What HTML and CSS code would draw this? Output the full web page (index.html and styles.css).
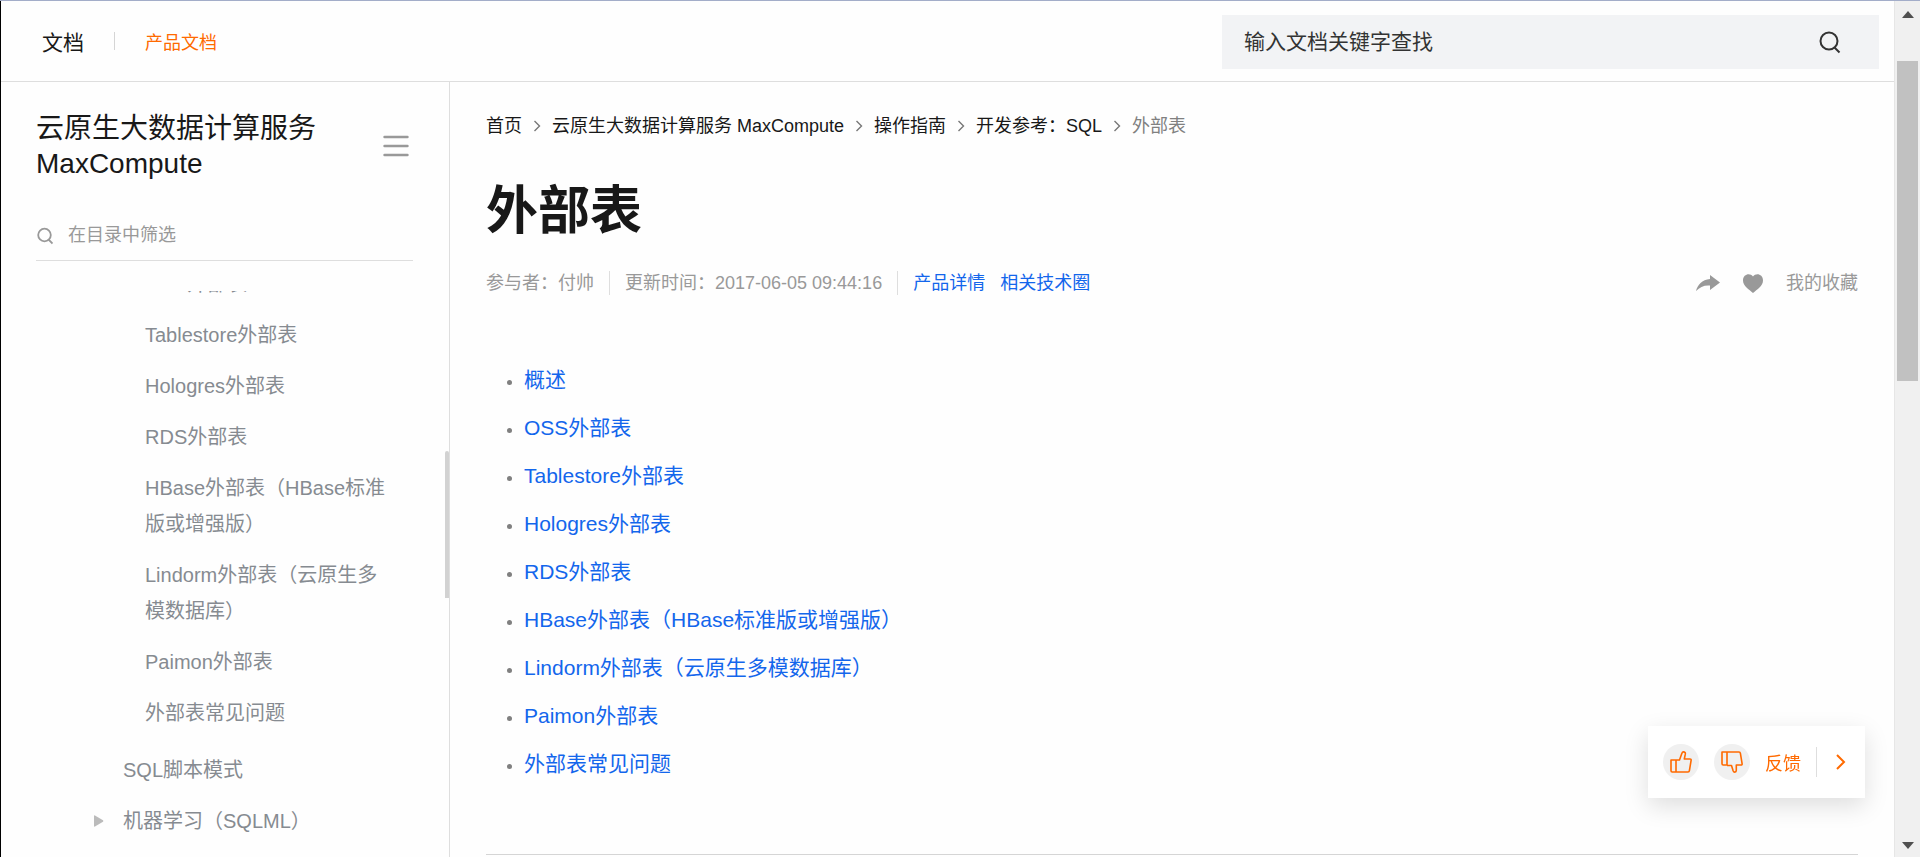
FILE: index.html
```html
<!DOCTYPE html>
<html lang="zh-CN">
<head>
<meta charset="utf-8">
<title>外部表</title>
<link rel="stylesheet" href="styles.css">
</head>
<body>
<div class="window">
  <div class="page">
    <header class="topbar">
      <nav class="topnav">
        <a class="brand" href="#">文档</a>
        <a class="section-link" href="#">产品文档</a>
      </nav>
      <form class="search">
        <input class="search-input" type="text" placeholder="输入文档关键字查找" aria-label="输入文档关键字查找">
        <button class="icon-button" type="button" aria-label="搜索">
          <svg width="24" height="24" viewBox="0 0 24 24" fill="none" stroke="#333" stroke-width="2"><circle cx="11" cy="11" r="8.5"/><path d="M16.5 17.5l5 5"/></svg>
        </button>
      </form>
    </header>
    <div class="body">
      <aside class="sidebar">
        <div class="sidebar-head">
          <h2 class="product">云原生大数据计算服务 MaxCompute</h2>
          <button class="icon-button" type="button" aria-label="收起目录">
            <svg width="26" height="22" viewBox="0 0 26 22" stroke="#999" stroke-width="2.4" stroke-linecap="round"><path d="M1.5 2h23M1.5 11h23M1.5 20h23"/></svg>
          </button>
        </div>
        <label class="filter">
          <svg width="16" height="18" viewBox="0 0 16 18" fill="none" stroke="#999" stroke-width="1.8"><circle cx="7.5" cy="8" r="6.3"/><path d="M11.5 12.5l4 4"/></svg>
          <input class="filter-input" type="text" placeholder="在目录中筛选" aria-label="在目录中筛选">
        </label>
        <nav class="tree">
          <ul class="tree-list">
            <li class="leaf"><a href="#">OSS外部表</a></li>
            <li class="leaf"><a href="#">Tablestore外部表</a></li>
            <li class="leaf"><a href="#">Hologres外部表</a></li>
            <li class="leaf"><a href="#">RDS外部表</a></li>
            <li class="leaf"><a href="#">HBase外部表（HBase标准版或增强版）</a></li>
            <li class="leaf"><a href="#">Lindorm外部表（云原生多模数据库）</a></li>
            <li class="leaf"><a href="#">Paimon外部表</a></li>
            <li class="leaf last"><a href="#">外部表常见问题</a></li>
            <li class="branch"><a href="#">SQL脚本模式</a></li>
            <li class="branch">
              <svg class="caret" width="10" height="12" viewBox="0 0 10 12" fill="#bbb"><path d="M0 1q0-1 1-.6L9 5.3q.8.7 0 1.4L1 11.6q-1 .4-1-.6z"/></svg>
              <a href="#">机器学习（SQLML）</a>
            </li>
          </ul>
        </nav>
        <div class="tree-thumb"></div>
      </aside>
      <main class="content">
        <nav class="crumbs">
          <a href="#">首页</a>
          <svg width="8" height="12" viewBox="0 0 8 12" fill="none" stroke="#777" stroke-width="1.4"><path d="M1.5 1l5 5-5 5"/></svg>
          <a href="#">云原生大数据计算服务 MaxCompute</a>
          <svg width="8" height="12" viewBox="0 0 8 12" fill="none" stroke="#777" stroke-width="1.4"><path d="M1.5 1l5 5-5 5"/></svg>
          <a href="#">操作指南</a>
          <svg width="8" height="12" viewBox="0 0 8 12" fill="none" stroke="#777" stroke-width="1.4"><path d="M1.5 1l5 5-5 5"/></svg>
          <a href="#">开发参考：SQL</a>
          <svg width="8" height="12" viewBox="0 0 8 12" fill="none" stroke="#777" stroke-width="1.4"><path d="M1.5 1l5 5-5 5"/></svg>
          <span class="current">外部表</span>
        </nav>
        <h1 class="title">外部表</h1>
        <div class="meta">
          <span class="meta-item">参与者：付帅</span>
          <span class="meta-item">更新时间：2017-06-05 09:44:16</span>
          <a class="link" href="#">产品详情</a>
          <a class="link" href="#">相关技术圈</a>
          <div class="actions">
            <button class="icon-button" type="button" aria-label="分享">
              <svg width="24" height="18" viewBox="0 0 24 18" fill="#999"><path d="M14 1l10 7.500-10 7.500v-4.500C8 11 4 13 0 17 1.500 11 6 5.500 14 5z"/></svg>
            </button>
            <button class="icon-button" type="button" aria-label="收藏">
              <svg width="20" height="19" viewBox="0 0 20 19" fill="#999"><path d="M10 2.500C13-1.500 20 0 20 6.500 20 12 14 15.500 10 19 6 15.500 0 12 0 6.500 0 0 7-1.500 10 2.500z"/></svg>
            </button>
            <a class="favorites" href="#">我的收藏</a>
          </div>
        </div>
        <ul class="toc">
          <li><a class="link" href="#">概述</a></li>
          <li><a class="link" href="#">OSS外部表</a></li>
          <li><a class="link" href="#">Tablestore外部表</a></li>
          <li><a class="link" href="#">Hologres外部表</a></li>
          <li><a class="link" href="#">RDS外部表</a></li>
          <li><a class="link" href="#">HBase外部表（HBase标准版或增强版）</a></li>
          <li><a class="link" href="#">Lindorm外部表（云原生多模数据库）</a></li>
          <li><a class="link" href="#">Paimon外部表</a></li>
          <li><a class="link" href="#">外部表常见问题</a></li>
        </ul>
        <hr class="rule">
      </main>
    </div>
    <div class="feedback">
      <button class="vote" type="button" aria-label="有用">
        <svg width="22" height="22" viewBox="0 0 22 22" fill="none" stroke="#ff6a00" stroke-width="1.6" stroke-linejoin="round"><path d="M1 9h5v12H2.200Q1 21 1 19.800zM6 9h3.500l2.200-6.200C12.300 1 13 .8 13.800.9c1.400.2 1.700 1.200 1.500 2.300L14.300 8H20q1.300 0 1.100 1.300l-1.700 10.400Q19.200 21 18 21H6"/></svg>
      </button>
      <button class="vote" type="button" aria-label="没用">
        <svg width="22" height="22" viewBox="0 0 22 22" fill="none" stroke="#ff6a00" stroke-width="1.6" stroke-linejoin="round"><path d="M1 1h5v13H2.200Q1 14 1 12.800zM6 1h12q1.200 0 1.400 1.300l1.700 10.400Q21.300 14 20 14h-4.700v5.300c0 1.200-.6 1.800-1.500 1.800s-1.400-.5-1.700-1.400L10.500 14.500H6"/></svg>
      </button>
      <button class="feedback-text" type="button">反馈</button>
      <button class="collapse" type="button" aria-label="收起">
        <svg width="10" height="16" viewBox="0 0 10 16" fill="none" stroke="#ff6a00" stroke-width="2"><path d="M1 1l7 7-7 7"/></svg>
      </button>
    </div>
  </div>
  <div class="scrollbar">
    <svg width="12" height="7" viewBox="0 0 12 7" fill="#505050"><path d="M0 7l6-7 6 7z"/></svg>
    <div class="track"><div class="thumb"></div></div>
    <svg width="12" height="7" viewBox="0 0 12 7" fill="#505050"><path d="M0 0l6 7 6-7z"/></svg>
  </div>
</div>
</body>
</html>
```
FILE: styles.css
```css
* { box-sizing: border-box; }
body {
  margin: 0;
  background: #fefefe;
  color: #181818;
  font-family: "Liberation Sans", "Noto Sans CJK SC", sans-serif;
  font-weight: 400;
  font-size: 18px;
}
a { color: inherit; text-decoration: none; }
ul { list-style: none; margin: 0; padding: 0; }
svg { display: block; flex: none; }
button {
  border: 0;
  padding: 0;
  background: none;
  font: inherit;
  color: inherit;
}
input {
  border: 0;
  padding: 0;
  background: none;
  font: inherit;
  outline: 0;
  min-width: 0;
}
.window {
  display: flex;
  height: 100vh;
  overflow: hidden;
  border-top: 1px solid #a3adc9;
}
.page {
  flex: 1;
  min-width: 0;
  display: flex;
  flex-direction: column;
  border-left: 1px solid #000;
}
.topbar {
  flex: none;
  display: flex;
  justify-content: space-between;
  align-items: center;
  height: 81px;
  padding: 0 15px 0 41px;
  border-bottom: 1px solid #dedede;
}
.topnav { display: flex; align-items: center; }
.brand { font-size: 21px; }
.section-link { color: #ff6a00; display: flex; align-items: center; }
.section-link::before {
  content: "";
  width: 1px;
  height: 18px;
  margin: 0 30px;
  background: #d5d5d5;
}
.search {
  display: flex;
  align-items: center;
  flex: 0 1 657px;
  height: 54px;
  margin-top: 2px;
  padding: 0 37px 0 22px;
  background: #f2f3f5;
}
.search-input { flex: 1; font-size: 21px; height: 54px; }
.search-input::placeholder { color: #333; }
.body { flex: 1; min-height: 0; display: flex; }
.sidebar {
  position: relative;
  flex: none;
  width: 449px;
  display: flex;
  flex-direction: column;
  padding-left: 35px;
  border-right: 1px solid #dedede;
}
.sidebar-head {
  display: flex;
  align-items: center;
  justify-content: space-between;
  padding: 29px 40px 0 0;
}
.product { width: 290px; margin: 0; font-size: 28px; line-height: 35px; font-weight: 400; }
.filter {
  display: flex;
  align-items: center;
  gap: 15px;
  height: 50px;
  margin: 30px 36px 0 0;
  padding-left: 1px;
  border-bottom: 1px solid #dedede;
}
.filter-input { flex: 1; height: 40px; }
.filter-input::placeholder { color: #999; }
.tree { flex: 1; min-height: 0; margin-top: 30px; overflow: hidden; }
.tree-list { margin-top: -25px; }
.tree-list li {
  display: flex;
  align-items: center;
  margin-bottom: 15px;
  padding-right: 55px;
  font-size: 20px;
  line-height: 36px;
  color: #868b91;
}
.leaf { padding-left: 109px; }
.tree-list .last { margin-bottom: 21px; }
.branch { position: relative; padding-left: 87px; }
.caret { position: absolute; left: 58px; }
.tree-thumb {
  position: absolute;
  top: 369px;
  right: 0;
  width: 4px;
  height: 147px;
  border-radius: 2px 2px 0 0;
  background: #d2d2d2;
}
.content { flex: 1; min-width: 0; padding: 30px 36px 0 36px; }
.crumbs { display: flex; align-items: center; gap: 11px; line-height: 28px; }
.current { color: #808080; }
.title { margin: 35px 0 0; font-size: 52px; line-height: 72px; font-weight: 700; }
.meta { display: flex; align-items: center; margin-top: 21px; line-height: 30px; color: #999; }
.meta-item { display: flex; align-items: center; }
.meta-item::after {
  content: "";
  width: 1px;
  height: 24px;
  margin: 0 15px;
  background: #dedede;
}
.link { color: #1366ec; }
.link + .link { margin-left: 15px; }
.actions { display: flex; align-items: center; gap: 23px; margin-left: auto; }
.toc { margin-top: 58px; padding-left: 21px; font-size: 21px; line-height: 48px; }
.toc li { display: flex; align-items: center; gap: 12px; }
.toc li::before {
  content: "";
  width: 5px;
  height: 5px;
  margin-top: 4px;
  border-radius: 50%;
  background: #808080;
}
.rule { margin: 66px 0 0; border: 0; border-top: 1px solid #d5d5d5; }
.feedback {
  position: fixed;
  right: 55px;
  bottom: 59px;
  display: flex;
  align-items: center;
  width: 217px;
  height: 72px;
  padding-left: 15px;
  background: #fff;
  color: #ff6a00;
  box-shadow: 0 8px 24px rgba(0, 0, 0, .13);
}
.vote {
  display: flex;
  align-items: center;
  justify-content: center;
  width: 36px;
  height: 36px;
  margin-right: 15px;
  border-radius: 50%;
  background: #f0f0f0;
}
.collapse {
  display: flex;
  align-items: center;
  height: 30px;
  margin-left: 15px;
  padding-left: 19px;
  border-left: 1px solid #dedede;
}
.scrollbar {
  flex: none;
  width: 26px;
  display: flex;
  flex-direction: column;
  align-items: center;
  padding: 10px 0 8px;
  background: #f0f0f0;
  border-left: 1px solid #e6e6e6;
}
.track { flex: 1; width: 21px; padding-top: 43px; }
.thumb { height: 41%; background: #c1c1c1; }
```
